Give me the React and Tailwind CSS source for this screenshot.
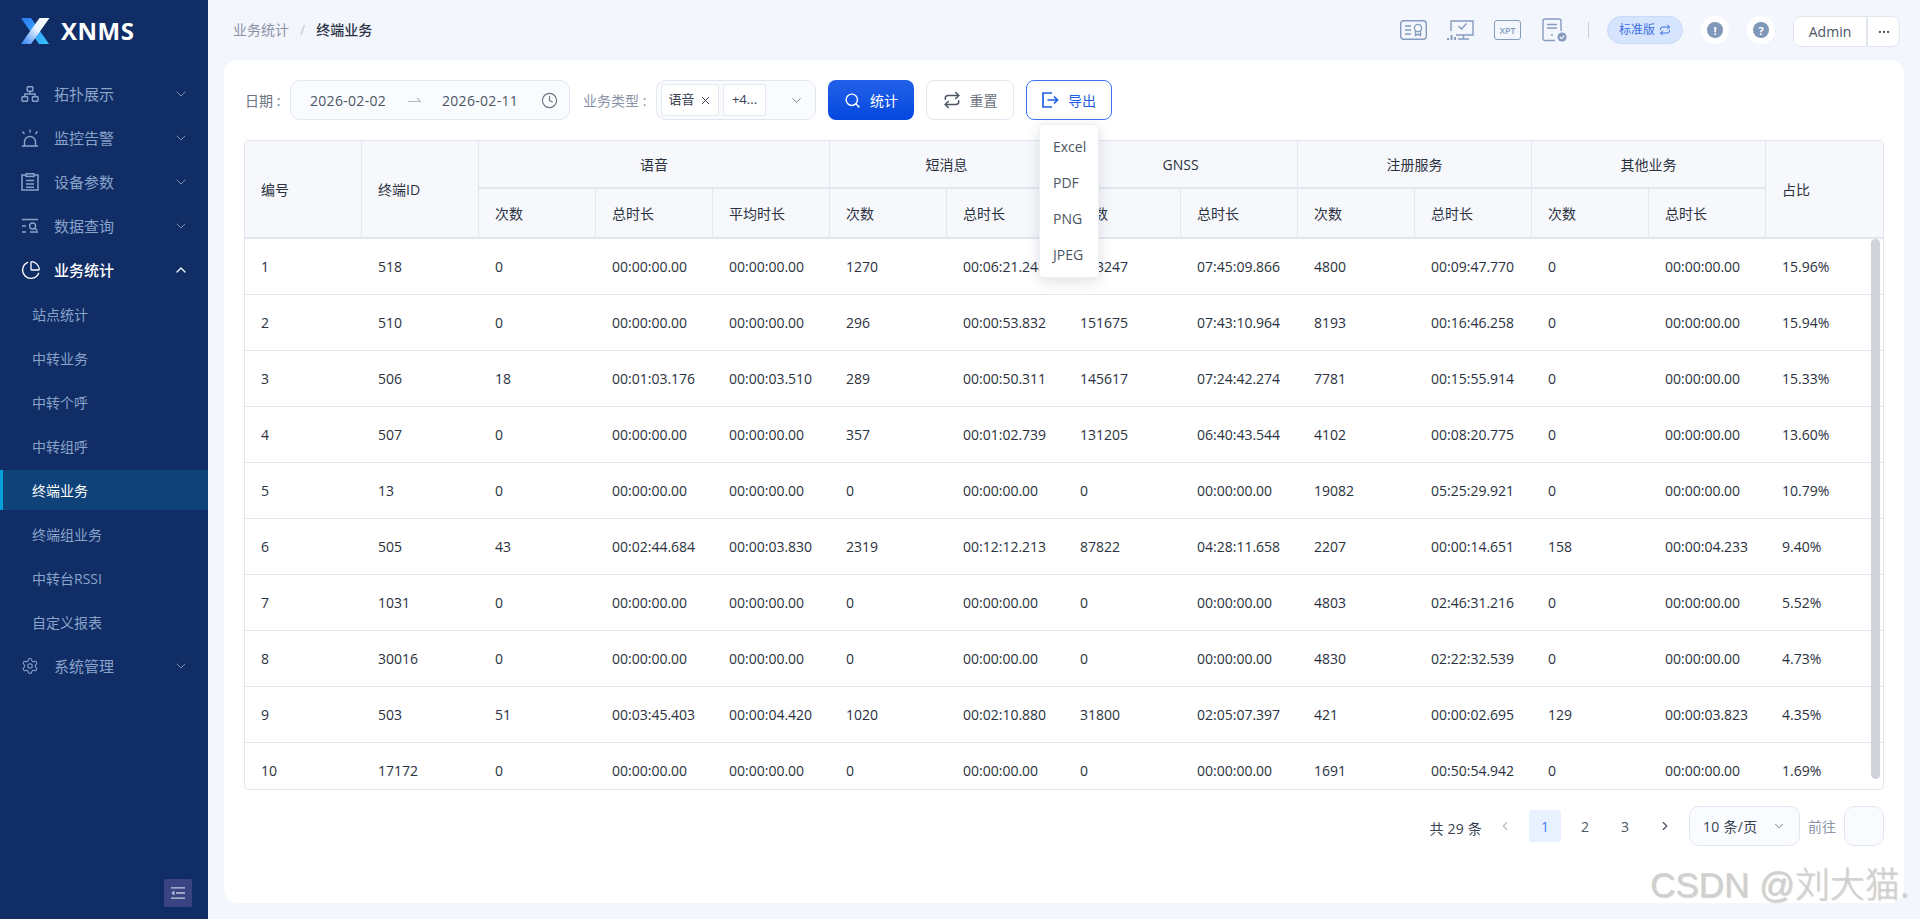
import { Search, Repeat, Clock, ChevronDown, ChevronUp, ChevronLeft, ChevronRight, X, MoreHorizontal, ChartPie, Settings } from 'lucide-react';

const rows = [
  [1, 518, 0, '00:00:00.00', '00:00:00.00', 1270, '00:06:21.248', 153247, '07:45:09.866', 4800, '00:09:47.770', 0, '00:00:00.00', '15.96%'],
  [2, 510, 0, '00:00:00.00', '00:00:00.00', 296, '00:00:53.832', 151675, '07:43:10.964', 8193, '00:16:46.258', 0, '00:00:00.00', '15.94%'],
  [3, 506, 18, '00:01:03.176', '00:00:03.510', 289, '00:00:50.311', 145617, '07:24:42.274', 7781, '00:15:55.914', 0, '00:00:00.00', '15.33%'],
  [4, 507, 0, '00:00:00.00', '00:00:00.00', 357, '00:01:02.739', 131205, '06:40:43.544', 4102, '00:08:20.775', 0, '00:00:00.00', '13.60%'],
  [5, 13, 0, '00:00:00.00', '00:00:00.00', 0, '00:00:00.00', 0, '00:00:00.00', 19082, '05:25:29.921', 0, '00:00:00.00', '10.79%'],
  [6, 505, 43, '00:02:44.684', '00:00:03.830', 2319, '00:12:12.213', 87822, '04:28:11.658', 2207, '00:00:14.651', 158, '00:00:04.233', '9.40%'],
  [7, 1031, 0, '00:00:00.00', '00:00:00.00', 0, '00:00:00.00', 0, '00:00:00.00', 4803, '02:46:31.216', 0, '00:00:00.00', '5.52%'],
  [8, 30016, 0, '00:00:00.00', '00:00:00.00', 0, '00:00:00.00', 0, '00:00:00.00', 4830, '02:22:32.539', 0, '00:00:00.00', '4.73%'],
  [9, 503, 51, '00:03:45.403', '00:00:04.420', 1020, '00:02:10.880', 31800, '02:05:07.397', 421, '00:00:02.695', 129, '00:00:03.823', '4.35%'],
  [10, 17172, 0, '00:00:00.00', '00:00:00.00', 0, '00:00:00.00', 0, '00:00:00.00', 1691, '00:50:54.942', 0, '00:00:00.00', '1.69%'],
];

const subHeads = ['次数', '总时长', '平均时长', '次数', '总时长', '次数', '总时长', '次数', '总时长', '次数', '总时长'];
const subMenus = ['站点统计', '中转业务', '中转个呼', '中转组呼', '终端业务', '终端组业务', '中转台RSSI', '自定义报表'];

function NetworkIcon() {
  return (
    <svg width="18" height="16" viewBox="0 0 18 16" fill="none" stroke="currentColor" strokeWidth="1.4">
      <rect x="6.2" y="0.8" width="5.6" height="4.4" rx="0.6" />
      <rect x="1" y="10.8" width="5.6" height="4.4" rx="0.6" />
      <rect x="11.4" y="10.8" width="5.6" height="4.4" rx="0.6" />
      <path d="M9 5.2V8M3.8 10.8V8h10.4v2.8" />
    </svg>
  );
}

function AlarmIcon() {
  return (
    <svg width="18" height="18" viewBox="0 0 18 18" fill="none" stroke="currentColor" strokeWidth="1.4">
      <path d="M1 17h16M3.5 17v-4a5.5 5.5 0 0 1 11 0v4" />
      <path d="M9 0.5v3M1.5 2.5l2 2.5M16.5 2.5l-2 2.5" />
    </svg>
  );
}

function ClipboardIcon() {
  return (
    <svg width="18" height="18" viewBox="0 0 18 18" fill="none" stroke="currentColor" strokeWidth="1.5">
      <path d="M5 2H1v15h16V2h-4" />
      <rect x="5" y="0.8" width="8" height="2.6" />
      <path d="M5 7.5h8M5 11h8M5 14.2h8" />
    </svg>
  );
}

function QueryIcon() {
  return (
    <svg width="18" height="16" viewBox="0 0 18 16" fill="none" stroke="currentColor" strokeWidth="1.4">
      <path d="M1 1.5h16M1 8h4M1 14h4M9 14h8" />
      <circle cx="11.6" cy="8" r="3" />
      <path d="M14 10.4l2.4 2.2" />
    </svg>
  );
}

function ExportIcon() {
  return (
    <svg width="17" height="16" viewBox="0 0 17 16" fill="none" stroke="currentColor" strokeWidth="1.7">
      <path d="M10 1H1v14h9" />
      <path d="M5.5 8H15.5M12 4.5L15.5 8 12 11.5" />
    </svg>
  );
}

function MenuItem({ icon, label, open, active }) {
  return (
    <div className={`flex h-11 items-center pl-[21px] pr-[19px] ${active ? 'text-white' : 'text-[#8aa3c9]'}`}>
      <span className="flex w-[33px] shrink-0 items-center">{icon}</span>
      <span className={`flex-1 text-[15px] ${active ? 'font-medium' : ''}`}>{label}</span>
      {open ? <ChevronUp size={16} strokeWidth={1.8} /> : <ChevronDown size={16} strokeWidth={1.4} className="text-[#8494b0]" />}
    </div>
  );
}

function Sidebar() {
  return (
    <aside className="relative flex h-full w-[208px] shrink-0 flex-col bg-[#102d66]">
      <div className="flex h-[72px] items-start pl-[21px] pt-[18px]">
        <svg width="29" height="26" viewBox="0 0 29 26">
          <defs>
            <linearGradient id="logoA" x1="0" y1="0" x2="1" y2="1">
              <stop offset="0" stopColor="#2f7bf5" />
              <stop offset="1" stopColor="#39c4ff" />
            </linearGradient>
            <linearGradient id="logoB" x1="1" y1="0" x2="0" y2="1">
              <stop offset="0" stopColor="#ffffff" />
              <stop offset="0.45" stopColor="#e8f3ff" />
              <stop offset="1" stopColor="#2a7df5" />
            </linearGradient>
          </defs>
          <polygon points="0,0 10,0 28,26 18,26" fill="url(#logoA)" />
          <polygon points="28.5,0 18.5,0 0,26 10,26" fill="url(#logoB)" />
        </svg>
        <span className="ml-[11px] mt-[-3px] text-[24px] font-bold leading-[32px] tracking-[0.5px] text-white">XNMS</span>
      </div>
      <MenuItem icon={<NetworkIcon />} label="拓扑展示" />
      <MenuItem icon={<AlarmIcon />} label="监控告警" />
      <MenuItem icon={<ClipboardIcon />} label="设备参数" />
      <MenuItem icon={<QueryIcon />} label="数据查询" />
      <MenuItem icon={<ChartPie size={20} strokeWidth={1.6} />} label="业务统计" open active />
      {subMenus.map((name) => (
        <div
          key={name}
          className={`my-0.5 flex h-10 items-center border-l-[3px] pl-[29px] text-[14px] ${
            name === '终端业务' ? 'border-[#05a0d8] bg-[#0f4279] text-white' : 'border-transparent text-[#8aa3c9]'
          }`}
        >
          {name}
        </div>
      ))}
      <MenuItem icon={<Settings size={18} strokeWidth={1.4} />} label="系统管理" />
      <div className="absolute bottom-3 right-4 flex h-7 w-7 items-center justify-center rounded-[2px] bg-[#3b4483]">
        <svg width="14" height="12" viewBox="0 0 14 12" fill="none" stroke="#c3c8de" strokeWidth="1.3">
          <path d="M0 0.8h14M5 6h9M0 11.2h14" />
          <path d="M3.4 3.6v4.8L0.4 6z" fill="#c3c8de" stroke="none" />
        </svg>
      </div>
    </aside>
  );
}

function HeaderIcons() {
  return (
    <div className="flex items-center text-[#859cbc]">
      <svg width="27" height="20" viewBox="0 0 27 20" fill="none" stroke="currentColor" strokeWidth="1.4">
        <rect x="0.7" y="0.7" width="25.6" height="18.6" rx="3" />
        <path d="M5 6h6M5 10h6M5 14h6" />
        <circle cx="18" cy="8" r="3.6" />
        <path d="M15.5 11v4.5l2.5-1.4 2.5 1.4V11" />
      </svg>
      <svg className="ml-5" width="27" height="20" viewBox="0 0 27 20" fill="none" stroke="currentColor" strokeWidth="1.4">
        <path d="M4 11V1h22v14H9" />
        <path d="M11.5 6l3 3 5-5.5M11 19h11M16.5 15v4" />
        <path d="M1 20v-2M4.5 20v-5M8 20v-3" strokeWidth="2" />
      </svg>
      <div className="ml-5 flex h-5 w-[27px] items-center justify-center rounded-[3px] border-[1.5px] border-current text-[9px] font-semibold leading-none">XPT</div>
      <svg className="ml-[21px]" width="25" height="24" viewBox="0 0 25 24" fill="none" stroke="currentColor" strokeWidth="1.4">
        <path d="M13 22.5H3a2 2 0 0 1-2-2V3a2 2 0 0 1 2-2h14a2 2 0 0 1 2 2v10" />
        <path d="M5 6.5h10M5 10h10" />
        <circle cx="10" cy="17" r="1" fill="currentColor" stroke="none" />
        <circle cx="20" cy="19" r="4.6" fill="currentColor" stroke="none" />
        <path d="M17.8 19l1.7 1.6 2.8-3" stroke="#f3f6fd" strokeWidth="1.2" />
      </svg>
    </div>
  );
}

function RoundBadge({ mark }) {
  return (
    <div className="flex h-7 w-7 items-center justify-center rounded-full bg-white">
      <div className="flex h-4 w-4 items-center justify-center rounded-full bg-[#7f97b8] text-[11px] font-bold leading-none text-white">{mark}</div>
    </div>
  );
}

function TopBar() {
  return (
    <header className="flex h-[60px] shrink-0 items-start justify-between pl-[25px] pr-[20px] pt-4">
      <div className="flex h-[26px] items-center text-[14px]">
        <span className="text-[#8a93a5]">业务统计</span>
        <span className="mx-[11px] text-[#c2c7d2]">/</span>
        <span className="font-medium text-[#2b3345]">终端业务</span>
      </div>
      <div className="flex items-start">
        <div className="flex h-7 items-center">
          <HeaderIcons />
          <div className="ml-[21px] h-4 w-px bg-[#c3cfe0]" />
        </div>
        <div className="ml-[18px] flex h-7 w-[76px] items-center justify-center gap-1 rounded-full border border-[#c9dafb] bg-[#d6e4fd] text-[12px] text-[#3c6fe2]">
          标准版
          <Repeat size={12} strokeWidth={2} />
        </div>
        <div className="ml-[18px]"><RoundBadge mark="!" /></div>
        <div className="ml-[18px]"><RoundBadge mark="?" /></div>
        <div className="ml-[18px] flex h-[31px] overflow-hidden rounded-[8px] border border-[#e1e6f1] bg-white text-[14px] text-[#4b5563]">
          <div className="flex w-[74px] items-center justify-center border-r-2 border-[#e1e6f1]">Admin</div>
          <div className="flex w-[31px] items-center justify-center"><MoreHorizontal size={14} /></div>
        </div>
      </div>
    </header>
  );
}

function Toolbar() {
  return (
    <div className="flex h-10 items-center text-[14px]">
      <span className="w-[46px] pl-px text-[#6b7280]">日期 :</span>
      <div className="flex h-10 w-[280px] items-center rounded-[10px] border border-[#e1e6f1] bg-[#fafbfe] pl-[19px] tracking-[0.3px] text-[#4b5563]">
        <span className="w-[78px]">2026-02-02</span>
        <svg className="ml-[20px]" width="13" height="6" viewBox="0 0 13 6" fill="none" stroke="#b4bac6" strokeWidth="1.2">
          <path d="M0 4.5h12.5L9 1" />
        </svg>
        <span className="ml-[21px] w-[78px]">2026-02-11</span>
        <Clock size={17} strokeWidth={1.6} className="ml-[21px] text-[#6b7280]" />
      </div>
      <span className="ml-[13px] w-[73px] text-[#8a93a5]">业务类型 :</span>
      <div className="flex h-10 w-[160px] items-center rounded-[10px] border border-[#e1e6f1] bg-[#fafbfe] pl-1 text-[#374151]">
        <div className="flex h-8 w-[58px] items-center justify-center gap-1 rounded-[2px] border border-[#e6e9f1] bg-white text-[13px]">
          语音<X size={13} strokeWidth={1.8} />
        </div>
        <div className="ml-1 flex h-8 w-[43px] items-center justify-center rounded-[2px] border border-[#e6e9f1] bg-white text-[13px]">+4...</div>
        <ChevronDown size={15} strokeWidth={1.4} className="ml-[23px] text-[#6b7280]" />
      </div>
      <button className="ml-3 flex h-10 w-[86px] items-center justify-center gap-[9px] rounded-[8px] bg-gradient-to-b from-[#2261e8] to-[#0347e0] text-[14px] font-normal text-white">
        <Search size={17} strokeWidth={2} />统计
      </button>
      <button className="ml-3 flex h-10 w-[88px] items-center justify-center gap-[9px] rounded-[8px] border border-[#e1e6f1] bg-white text-[14px] text-[#6b7280]">
        <Repeat size={18} strokeWidth={2} className="text-[#4b5563]" />重置
      </button>
      <div className="relative ml-3">
        <button className="flex h-10 w-[86px] items-center justify-center gap-[9px] rounded-[8px] border border-[#3b76ee] bg-white text-[14px] text-[#1f5fe6]">
          <ExportIcon />导出
        </button>
        <div className="absolute left-[13px] top-[44px] z-10 w-[60px] rounded-[4px] border border-[#eef0f5] bg-white pb-[5px] pt-[3px] text-[14px] text-[#4b5563] shadow-[0_4px_14px_rgba(30,40,70,0.14)]">
          {['Excel', 'PDF', 'PNG', 'JPEG'].map((t) => (
            <div key={t} className="flex h-9 items-center pl-[13px]">{t}</div>
          ))}
        </div>
      </div>
    </div>
  );
}

function StatTable() {
  const head = 'border-b-2 border-r border-[#e3e6ef] bg-[#f7f8fc] font-normal';
  return (
    <div className="relative mt-5 h-[650px] overflow-hidden rounded-[4px] border border-[#e3e6ef]">
      <table className="w-[1638px] table-fixed border-separate border-spacing-0 text-[14px] text-[#2a3140]">
        <colgroup>
          {Array.from({ length: 14 }).map((_, i) => <col key={i} className="w-[117px]" />)}
        </colgroup>
        <thead>
          <tr>
            <th rowSpan={2} className={`${head} pl-4 text-left`}>编号</th>
            <th rowSpan={2} className={`${head} pl-4 text-left`}>终端ID</th>
            <th colSpan={3} className={`${head} h-[48px] text-center`}>语音</th>
            <th colSpan={2} className={`${head} text-center`}>短消息</th>
            <th colSpan={2} className={`${head} text-center`}>GNSS</th>
            <th colSpan={2} className={`${head} text-center`}>注册服务</th>
            <th colSpan={2} className={`${head} text-center`}>其他业务</th>
            <th rowSpan={2} className="border-b-2 border-[#e3e6ef] bg-[#f7f8fc] pl-4 text-left font-normal">占比</th>
          </tr>
          <tr>
            {subHeads.map((t, i) => (
              <th key={i} className={`${head} h-[50px] pl-4 text-left`}>{t}</th>
            ))}
          </tr>
        </thead>
        <tbody>
          {rows.map((row) => (
            <tr key={row[0]}>
              {row.map((v, i) => (
                <td key={i} className="h-[56px] border-b border-[#e3e6ef] pl-4">{v}</td>
              ))}
            </tr>
          ))}
        </tbody>
      </table>
      <div className="absolute right-[3px] top-[98px] h-[540px] w-[9px] rounded-full bg-[#d0d3da]" />
    </div>
  );
}

function Pagination() {
  const pager = 'flex h-8 w-8 items-center justify-center rounded-[2px]';
  return (
    <div className="mt-4 flex h-10 items-center justify-end text-[14px] text-[#4b5563]">
      <span className="mr-[7px] pt-1 tracking-[0.2px] text-[#374151]">共 29 条</span>
      <div className="flex items-center gap-2">
        <div className={`${pager} text-[#b8bdc8]`}><ChevronLeft size={14} /></div>
        <div className={`${pager} bg-[#e8f1ff] text-[#3b82f6]`}>1</div>
        <div className={pager}>2</div>
        <div className={pager}>3</div>
        <div className={pager}><ChevronRight size={14} /></div>
      </div>
      <div className="ml-2 flex h-10 w-[111px] items-center justify-between rounded-[10px] border border-[#e1e6f1] bg-[#fafbfe] pl-[13px] pr-[13px] tracking-[0.3px] text-[#374151]">
        10 条/页
        <ChevronDown size={14} strokeWidth={1.5} className="text-[#6b7280]" />
      </div>
      <span className="ml-2 text-[14px] text-[#8a93a5]">前往</span>
      <div className="ml-2 h-10 w-10 rounded-[10px] border border-[#e1e6f1] bg-[#fafbfe]" />
    </div>
  );
}

export default function App() {
  return (
    <div className="relative flex h-[919px] w-[1920px] overflow-hidden bg-[#f3f6fd] font-['Open_Sans','Noto_Sans_CJK_SC',sans-serif]">
      <Sidebar />
      <main className="flex min-w-0 flex-1 flex-col">
        <TopBar />
        <section className="mx-4 mb-4 flex-1 rounded-[14px] bg-white px-5 pt-5">
          <Toolbar />
          <StatTable />
          <Pagination />
        </section>
      </main>
      <div className="absolute bottom-[14px] left-[1650px] whitespace-nowrap font-['Liberation_Sans','Noto_Sans_CJK_SC',sans-serif] text-[35px] font-light leading-[40px] text-[#cfcfcf]/90 [text-shadow:1px_1px_1px_rgba(120,120,120,0.35)]">
        CSDN @刘大猫.
      </div>
    </div>
  );
}
